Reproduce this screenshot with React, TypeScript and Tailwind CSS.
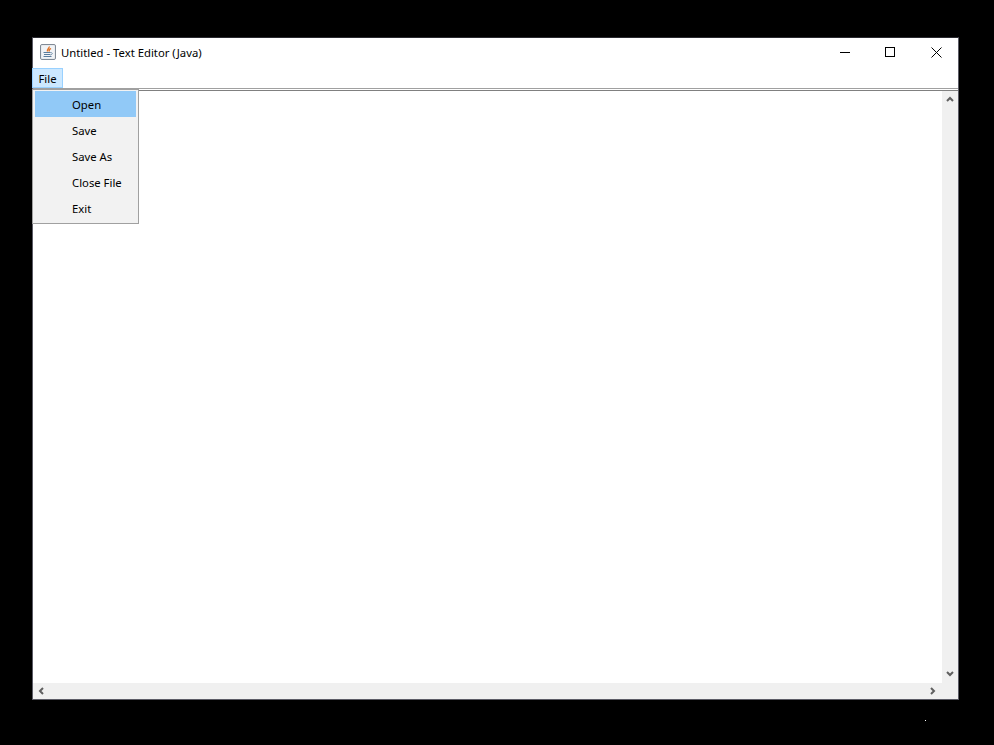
const menuItems = ["Open", "Save", "Save As", "Close File", "Exit"];

function JavaIcon() {
  return (
    <svg width="16" height="16" viewBox="0 0 16 16" className="block">
      <rect x="0.5" y="0.5" width="15" height="15" rx="1.5" fill="#dfe4ea" stroke="#808a96" />
      <rect x="1.5" y="1.5" width="13" height="13" fill="#f1f3f6" />
      <path d="M9 2.500c1 1.500-2.500 2.500-1.500 5M11 4.500c-1.500 1-2.500 1.500-1.500 3" fill="none" stroke="#e2762a" strokeWidth="1.400" />
      <path d="M3.500 8.500h7M4 10.500h6M3.500 12.500h8" fill="none" stroke="#5a7d9e" strokeWidth="1" />
      <path d="M10.500 8.500c2.500 0 2.500 2-.5 2.500" fill="none" stroke="#5a7d9e" strokeWidth="0.800" />
    </svg>
  );
}

// the small bold arrows on the scroll bars
function Arrow({ d, w, h }: { d: string; w: number; h: number }) {
  return (
    <svg width={w} height={h} viewBox={`0 0 ${w} ${h}`} className="block shrink-0">
      <path d={d} fill="none" stroke="#606060" strokeWidth="2" />
    </svg>
  );
}

export default function App() {
  return (
    <div className="relative h-[745px] w-[994px] overflow-hidden bg-black pl-[32px] pt-[37px] font-['Noto_Sans',sans-serif] text-[11.3px] text-black">
      <div className="relative flex h-[663px] w-[927px] flex-col border border-t-[#2a2a30] border-r-[#5c5c66] border-b-[#5c5c66] border-l-[#5c5c66] bg-white">
        {/* title bar */}
        <div className="flex h-[30px] items-center pb-[2px] pl-[7px]">
          <JavaIcon />
          <span className="ml-[5px] mt-[2px]">Untitled - Text Editor (Java)</span>
          <div className="ml-auto flex h-full items-center">
            <div className="flex h-full w-[42px] items-center justify-center">
              <div className="h-px w-[10px] bg-black" />
            </div>
            <div className="flex h-full w-[48px] items-center justify-center">
              <div className="h-[10px] w-[10px] border border-black" />
            </div>
            <div className="flex h-full w-[44px] items-center justify-center">
              <svg width="11" height="11" viewBox="0 0 11 11">
                <path d="M0.500 0.500l10 10M10.500 0.500l-10 10" stroke="#000" strokeWidth="1" fill="none" />
              </svg>
            </div>
          </div>
        </div>

        {/* menu bar */}
        <div className="flex h-[20px]">
          <div className="-ml-px flex h-[20px] w-[31px] items-center justify-center border border-[#99d1ff] bg-[#cce8ff] pt-[2px]">File</div>
        </div>
        <div className="h-[3px] border-t border-b border-t-[#a0a0a0] border-b-[#808080] bg-white" />

        {/* editor */}
        <div className="flex min-h-0 flex-1 flex-col">
          <div className="flex min-h-0 flex-1">
            <div className="flex-1" />
            <div className="flex w-[16px] flex-col items-center justify-between bg-[#f0f0f0] pb-[6px] pt-[5px]">
              <Arrow w={8} h={6} d="M1 5l3-3 3 3" />
              <Arrow w={8} h={6} d="M1 1l3 3 3-3" />
            </div>
          </div>
          <div className="flex h-[16px] items-center justify-between bg-[#f0f0f0] pl-[5px] pr-[22px]">
            <Arrow w={6} h={8} d="M5 1L2 4l3 3" />
            <Arrow w={6} h={8} d="M1 1l3 3-3 3" />
          </div>
        </div>

        {/* open menu */}
        <div className="absolute left-[-1px] top-[51px] w-[107px] border border-[#a0a0a0] bg-[#f2f2f2] px-[2px] pb-[2px] pt-[1px]">
          {menuItems.map((item, i) => (
            <div key={item} className={`flex h-[26px] items-center pl-[37px] pt-[3px] ${i === 0 ? "bg-[#91c9f7]" : ""}`}>
              {item}
            </div>
          ))}
        </div>
      </div>

      {/* stray pixel */}
      <div className="absolute left-[925px] top-[720px] h-px w-px bg-white" />
    </div>
  );
}
